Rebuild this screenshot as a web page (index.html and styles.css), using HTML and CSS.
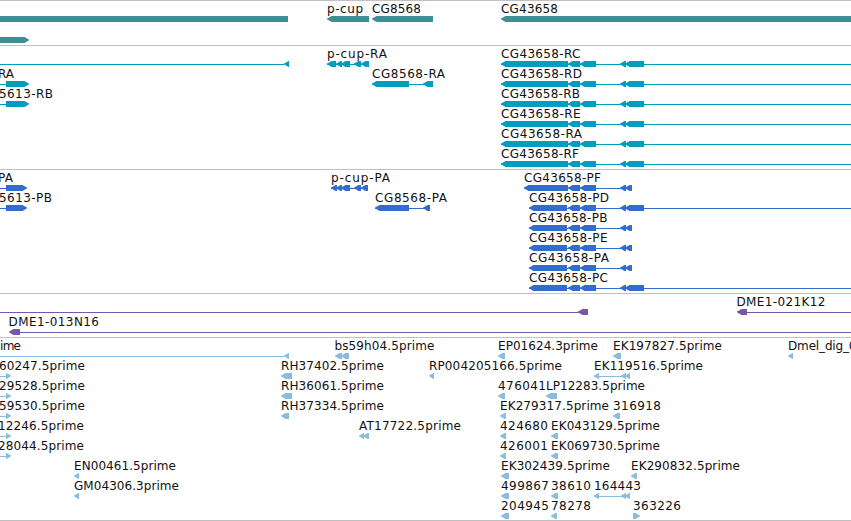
FILE: index.html
```html
<!DOCTYPE html>
<html lang="en">
<head>
  <meta charset="UTF-8" />
  <meta name="viewport" content="width=device-width, initial-scale=1.0" />
  <title>Genome Browser</title>
  <link rel="stylesheet" href="styles.css">
</head>
<body>
  <main class="browser">
    <section class="track track-gene" id="gene"></section>
    <section class="track track-mrna" id="mrna"></section>
    <section class="track track-cds" id="cds"></section>
    <section class="track track-bac" id="bac"></section>
    <section class="track track-est" id="est"></section>
  </main>
  <script src="tracks.js"></script>
</body>
</html>
```
FILE: styles.css
```css
body {
  margin: 0;
  background: #fff;
  font-family: "DejaVu Sans", sans-serif;
  overflow: hidden;
}

.browser {
  display: flex;
  flex-direction: column;
  width: 851px;
  border-bottom: 1px solid #c0c0c0;
}

.track {
  box-sizing: border-box;
  border-top: 1px solid #c0c0c0;
  overflow: hidden;
}

.track svg {
  display: block;
  width: 100%;
  height: 100%;
}

.track text {
  font-size: 12px;
  fill: #111;
}

.track-gene {
  height: 45px;
  color: #408e94;
}

.track-mrna {
  height: 124px;
  color: #009dbf;
}

.track-cds {
  height: 124px;
  color: #326dce;
}

.track-bac {
  height: 44px;
  color: #7657a8;
}

.track-est {
  height: 183px;
  color: #8abddd;
}
```
FILE: tracks.js
```js
const NS = "http://www.w3.org/2000/svg";
const END = 851;

// feature: blocks [start, end], optional label [text, x, width], intron line, dir
const left = (blocks, label, line) => ({ blocks, label, line, dir: -1 });
const right = (blocks, label, line) => ({ blocks, label, line, dir: 1 });

const exons = [[568, 580], [580, 596], [620, 626], [625, 644]];
const shortExons = [[568, 580], [580, 596], [620, 626], [625, 632]];

const rna = (name, width) => left([[501, 568], ...exons], [name, 501, width], [501, END]);
const cds = (name, width) => left([[529, 567], ...shortExons], [name, 529, width], [529, 632]);
const cdsLong = (name, width) => left([[529, 567], ...exons], [name, 529, width], [529, END]);
const estLeft = (name, x, width) => right([[6, 11]], [name, x, width], [0, 6]);
const est = (name, start, end, width) => left([[start, end]], [name, start, width]);

const tracks = {
  gene: {
    pitch: 21,
    rows: [
      [
        { blocks: [[0, 288]], dir: 0 },
        left([[327, 369]], ["p-cup", 327, 36]),
        left([[372, 433]], ["CG8568", 372, 49]),
        left([[501, END]], ["CG43658", 501, 57])
      ],
      [right([[-5, 29]])]
    ]
  },
  mrna: {
    pitch: 20,
    rows: [
      [
        left([[284, 289]], null, [0, 284]),
        left([[327, 336], [336, 342], [341, 350], [354, 361], [361, 369]], ["p-cup-RA", 327, 60], [327, 369]),
        rna("CG43658-RC", 79.5)
      ],
      [
        right([[6, 29]], ["RA", -2, 16], [0, 6]),
        left([[372, 409], [423, 433]], ["CG8568-RA", 372, 73], [372, 433]),
        rna("CG43658-RD", 81)
      ],
      [right([[6, 29]], ["5613-RB", -1, 54], [0, 6]), rna("CG43658-RB", 79)],
      [rna("CG43658-RE", 79.5)],
      [rna("CG43658-RA", 81)],
      [rna("CG43658-RF", 78)]
    ]
  },
  cds: {
    pitch: 20,
    rows: [
      [
        right([[6, 27]], ["PA", -2, 15], [0, 6]),
        left([[331, 337], [336, 342], [341, 350], [354, 361], [361, 368]], ["p-cup-PA", 331, 59], [331, 368]),
        left([[524, 568], ...shortExons], ["CG43658-PF", 524, 77], [524, 632])
      ],
      [
        right([[6, 27]], ["5613-PB", -1, 53], [0, 6]),
        left([[375, 409], [423, 430]], ["CG8568-PA", 375, 72], [375, 430]),
        cdsLong("CG43658-PD", 80)
      ],
      [cds("CG43658-PB", 78.5)],
      [cds("CG43658-PE", 78.5)],
      [cds("CG43658-PA", 80)],
      [cdsLong("CG43658-PC", 79)]
    ]
  },
  bac: {
    pitch: 20,
    rows: [
      [
        left([[578, 588]], null, [0, 580]),
        left([[737, 747]], ["DME1-021K12", 736.5, 89], [740, END])
      ],
      [left([[9, 20]], ["DME1-013N16", 8.5, 90.5], [12, END])]
    ]
  },
  est: {
    pitch: 20,
    rows: [
      [
        left([[284, 289]], ["ime", 0, 21], [0, 284]),
        left([[335, 342], [341, 349]], ["bs59h04.5prime", 334.5, 100]),
        est("EP01624.3prime", 498, 505, 100),
        est("EK197827.5prime", 613, 621, 109),
        est("Dmel_dig_0", 788, 793, 68.5)
      ],
      [
        estLeft("60247.5prime", -1, 86),
        est("RH37402.5prime", 281, 292, 103),
        est("RP004205166.5prime", 429, 434, 133),
        left([[594, 599], [621, 626], [625, 630]], ["EK119516.5prime", 594, 109], [594, 630])
      ],
      [
        estLeft("29528.5prime", -1, 86),
        est("RH36061.5prime", 281, 292, 103),
        est("476041", 498, 505, 48),
        est("LP12283.5prime", 546, 557, 99)
      ],
      [
        estLeft("59530.5prime", -1, 86),
        est("RH37334.5prime", 281, 289, 103),
        est("EK279317.5prime", 500, 506, 109),
        est("316918", 613, 620, 48)
      ],
      [
        estLeft("12246.5prime", -2, 86),
        left([[359, 364], [363, 369]], ["AT17722.5prime", 359, 102]),
        est("424680", 500, 506, 48),
        est("EK043129.5prime", 551, 558, 109)
      ],
      [
        estLeft("28044.5prime", -2, 86),
        est("426001", 500, 506, 48),
        est("EK069730.5prime", 551, 558, 109)
      ],
      [
        est("EN00461.5prime", 74, 79, 102),
        est("EK302439.5prime", 501, 509, 109),
        est("EK290832.5prime", 631, 637, 109)
      ],
      [
        est("GM04306.3prime", 74, 79, 105),
        est("499867", 501, 509, 48),
        est("38610", 551, 558, 40),
        left([[594, 599], [621, 626], [625, 630]], ["164443", 594, 47], [594, 630])
      ],
      [
        est("204945", 501, 509, 48),
        est("78278", 551, 557, 40),
        right([[633, 640]], ["363226", 633, 48])
      ]
    ]
  }
};

function add(svg, tag, attrs) {
  const el = document.createElementNS(NS, tag);
  for (const key in attrs) el.setAttribute(key, attrs[key]);
  svg.appendChild(el);
  return el;
}

function blockPoints(start, end, y, dir) {
  if (dir === 0) {
    return `${start},${y} ${end},${y} ${end},${y + 6} ${start},${y + 6}`;
  }
  const tip = dir < 0 ? start : end;
  const tail = dir < 0 ? end : start;
  const step = -dir;
  return [
    [tip, y + 2.5],
    [tip + step * 2, y + 1.4],
    [tip + step * 4.5, y],
    [tail, y],
    [tail, y + 6],
    [tip + step * 4.5, y + 6],
    [tip + step * 2, y + 4.6],
    [tip, y + 3.2]
  ].map(p => p.join(",")).join(" ");
}

for (const id in tracks) {
  const { rows, pitch } = tracks[id];
  const svg = document.createElementNS(NS, "svg");
  rows.forEach((row, i) => {
    const y = 15 + i * pitch;
    row.forEach(f => {
      if (f.line) {
        add(svg, "rect", { x: f.line[0], y: y + 3, width: f.line[1] - f.line[0], height: 1, fill: "currentColor" });
      }
      f.blocks.forEach(([start, end]) => {
        add(svg, "polygon", { points: blockPoints(start, end, y, f.dir), fill: "currentColor" });
      });
      if (f.label) {
        const [text, x, width] = f.label;
        add(svg, "text", { x, y: y - 3, textLength: width }).textContent = text;
      }
    });
  });
  document.getElementById(id).appendChild(svg);
}
```
